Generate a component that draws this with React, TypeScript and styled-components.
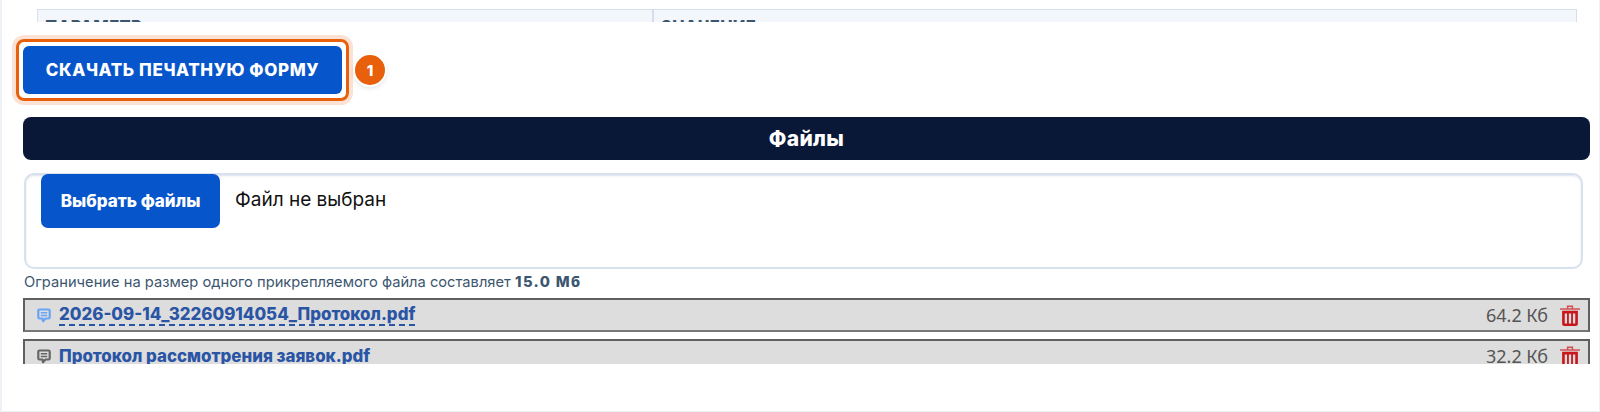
import React from 'react';
import styled, { createGlobalStyle } from 'styled-components';

const GlobalStyle = createGlobalStyle`
  html, body {
    margin: 0;
    padding: 0;
    background: #fff;
    font-family: 'Inter', 'Noto Sans', sans-serif;
  }
  * { box-sizing: border-box; }
`;

const Panel = styled.div`
  width: 1600px;
  height: 412px;
  border-left: 2px solid #eef1f6;
  border-right: 1px solid #eef1f6;
  border-bottom: 1px solid #eef1f6;
  padding: 9px 9px 0 21px;
  overflow: hidden;
`;

const TableClip = styled.div`
  height: 13px;
  margin: 0 13px 0 14px;
  overflow: hidden;
`;

const TableHead = styled.div`
  display: grid;
  grid-template-columns: 614px 1fr;
  height: 40px;
  background: #f3f7fb;
  border: 1px solid #d5dfeb;
`;

const HeadCell = styled.div<{ $divider?: boolean }>`
  padding: 6px 0 0 7px;
  font-size: 16.5px;
  font-weight: 800;
  letter-spacing: 0.3px;
  line-height: 20px;
  color: #3d5670;
  ${(p) => p.$divider && 'border-left: 2px solid #d5dfeb;'}
`;

const ActionRow = styled.div`
  display: flex;
  align-items: center;
  gap: 6px;
  margin: 17px 0 0 -7px;
`;

const HighlightRing = styled.div`
  display: flex;
  padding: 4px;
  border: 3px solid #e85f0c;
  border-radius: 8px;
  box-shadow: 0 0 0 4px #fbe2d4;
`;

const DownloadButton = styled.button`
  width: 319px;
  height: 48px;
  border: 0;
  border-radius: 6px;
  background: #0755cb;
  color: #fff;
  font-family: inherit;
  font-size: 17px;
  font-weight: 800;
  letter-spacing: 0.6px;
`;

const Badge = styled.span`
  display: flex;
  align-items: center;
  justify-content: center;
  width: 30px;
  height: 30px;
  border-radius: 50%;
  background: #e85f0c;
  color: #fff;
  font-size: 15px;
  font-weight: 800;
  box-shadow: 0 0 0 2px #fff, 0 2px 6px rgba(0, 0, 0, 0.18);
`;

const FilesBar = styled.div`
  display: flex;
  align-items: center;
  justify-content: center;
  height: 43px;
  margin-top: 16px;
  border-radius: 8px;
  background: #0a1838;
  color: #fff;
  font-size: 21px;
  font-weight: 800;
  letter-spacing: 0.3px;
`;

const UploadBox = styled.div`
  display: flex;
  align-items: flex-start;
  gap: 15px;
  height: 96px;
  margin: 13px 7px 0 1px;
  padding: 0 0 0 15px;
  border: 2px solid #d8e2ee;
  border-radius: 10px;
  box-shadow: inset 0 1px 2px rgba(120, 145, 175, 0.25);
`;

const PickButton = styled.button`
  width: 179px;
  height: 54px;
  margin-top: -1px;
  border: 0;
  border-radius: 7px;
  background: #0755cb;
  color: #fff;
  font-family: inherit;
  font-size: 17px;
  font-weight: 800;
`;

const PickLabel = styled.span`
  margin-top: 14px;
  font-size: 19px;
  line-height: 22px;
  color: #111;
`;

const Hint = styled.div`
  margin: 4px 0 0 1px;
  font-size: 14.7px;
  line-height: 18px;
  color: #3d5670;

  b {
    font-size: 14.7px;
    font-weight: 800;
    letter-spacing: 1.4px;
  }
`;

const FilesClip = styled.div`
  height: 66px;
  margin-top: 7px;
  overflow: hidden;
`;

const FileRow = styled.div`
  display: flex;
  align-items: center;
  height: 34px;
  margin-bottom: 7px;
  padding: 0 8px 0 12px;
  background: #dddddd;
  border: 2px solid #5f5f5f;
  border-bottom-color: #777;
`;

const FileIcon = styled.svg<{ $color: string }>`
  flex: none;
  width: 14px;
  height: 15px;
  margin-right: 8px;
  color: ${(p) => p.$color};
`;

const FileName = styled.a<{ $dashed?: boolean }>`
  font-size: 16.9px;
  font-weight: 800;
  line-height: 22px;
  color: #2a55a5;
  ${(p) => p.$dashed && 'border-bottom: 2px dashed #2a55a5; line-height: 20px;'}
`;

const FileSize = styled.span`
  margin-left: auto;
  font-family: 'Noto Sans', sans-serif;
  font-size: 18px;
  color: #555;
`;

const TrashIcon = styled.svg`
  flex: none;
  width: 20px;
  height: 21px;
  margin-left: 12px;
  color: #c9161b;
`;

const Comment = ({ color }: { color: string }) => (
  <FileIcon $color={color} viewBox="0 0 14 15">
    <path
      fill="none"
      stroke="currentColor"
      strokeWidth="2.2"
      strokeLinejoin="round"
      d="M2.500 1.500h9a1.200 1.200 0 0 1 1.200 1.200v6.600a1.200 1.200 0 0 1-1.200 1.200H8.500L6 13.300 5.500 10.500h-3a1.200 1.200 0 0 1-1.200-1.200V2.700a1.200 1.200 0 0 1 1.200-1.200z"
    />
    <path stroke="currentColor" strokeWidth="1.500" d="M3.800 4.700h6.400M3.800 7.500h6.400" />
  </FileIcon>
);

const Trash = () => (
  <TrashIcon viewBox="0 0 19 20">
    <path
      fill="currentColor"
      opacity="0.7"
      fillRule="evenodd"
      d="M0 3h6.500V.500h6V3H19v1.500H0zM8 2v1h3V2z"
    />
    <path
      fill="currentColor"
      fillRule="evenodd"
      d="M2 5.500h15V18a2 2 0 0 1-2 2H4a2 2 0 0 1-2-2zM4.500 8v9.500h2.200V8zM8.400 8v9.500h2.200V8zM12.300 8v9.500h2.200V8z"
    />
  </TrashIcon>
);

export default function App() {
  return (
    <>
      <GlobalStyle />
      <Panel>
        <TableClip>
          <TableHead>
            <HeadCell>ПАРАМЕТР</HeadCell>
            <HeadCell $divider>ЗНАЧЕНИЕ</HeadCell>
          </TableHead>
        </TableClip>
        <ActionRow>
          <HighlightRing>
            <DownloadButton>СКАЧАТЬ ПЕЧАТНУЮ ФОРМУ</DownloadButton>
          </HighlightRing>
          <Badge>1</Badge>
        </ActionRow>
        <FilesBar>Файлы</FilesBar>
        <UploadBox>
          <PickButton>Выбрать файлы</PickButton>
          <PickLabel>Файл не выбран</PickLabel>
        </UploadBox>
        <Hint>
          Ограничение на размер одного прикрепляемого файла составляет <b>15.0 Мб</b>
        </Hint>
        <FilesClip>
          <FileRow>
            <Comment color="#6aa5f5" />
            <FileName $dashed>2026-09-14_32260914054_Протокол.pdf</FileName>
            <FileSize>64.2 Кб</FileSize>
            <Trash />
          </FileRow>
          <FileRow>
            <Comment color="#666" />
            <FileName>Протокол рассмотрения заявок.pdf</FileName>
            <FileSize>32.2 Кб</FileSize>
            <Trash />
          </FileRow>
        </FilesClip>
      </Panel>
    </>
  );
}
